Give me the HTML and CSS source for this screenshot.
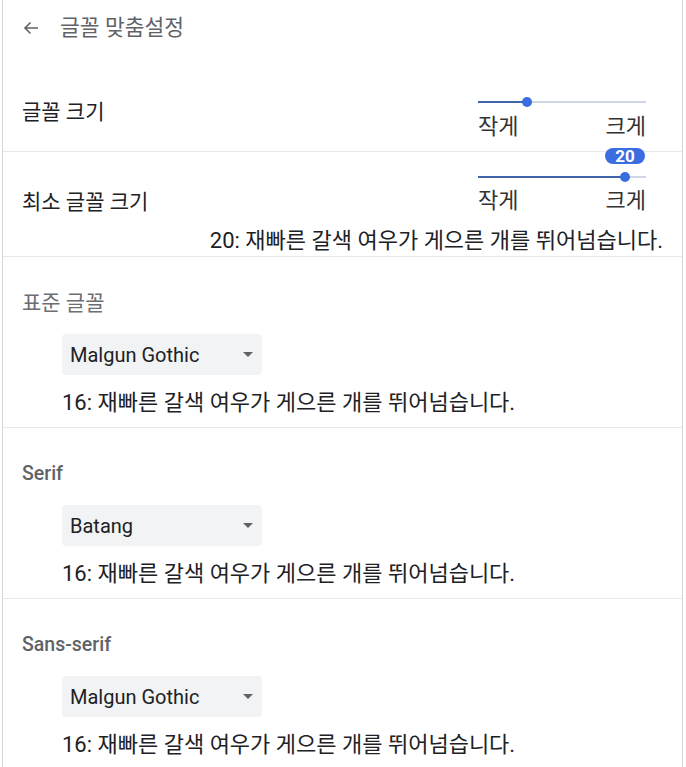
FILE: index.html
```html
<!DOCTYPE html>
<html lang="ko">
<head>
    <meta charset="UTF-8">
    <meta name="viewport" content="width=device-width, initial-scale=1.0">
    <title>글꼴 맞춤설정</title>
    <link rel="stylesheet" href="styles.css">
</head>
<body>
    <div class="page">
        <div class="header">
            <svg class="back-icon" width="16" height="14" viewBox="0 0 16 14">
                <path d="M15 7H2 M7.5 1.5 L2 7 L7.5 12.5" fill="none" stroke="#5f6368" stroke-width="1.6"/>
            </svg>
            <span class="header-title">글꼴 맞춤설정</span>
        </div>

        <div class="row row-size">
            <div class="row-label">글꼴 크기</div>
            <div class="slider">
                <div class="track-area">
                    <div class="track">
                        <div class="track-fill" style="width: 29%"></div>
                    </div>
                    <div class="thumb" style="left: 29%"></div>
                </div>
                <div class="slider-labels">
                    <span>작게</span>
                    <span>크게</span>
                </div>
            </div>
        </div>

        <div class="row row-min">
            <div class="row-top">
                <div class="row-label min-label">최소 글꼴 크기</div>
                <div class="slider">
                    <div class="track-area">
                        <div class="track">
                            <div class="track-fill" style="width: 87.5%"></div>
                        </div>
                        <div class="thumb" style="left: 87.5%"></div>
                        <div class="bubble" style="left: 87.5%">20</div>
                    </div>
                    <div class="slider-labels">
                        <span>작게</span>
                        <span>크게</span>
                    </div>
                </div>
            </div>
            <div class="sample sample-right">20: 재빠른 갈색 여우가 게으른 개를 뛰어넘습니다.</div>
        </div>

        <div class="section">
            <div class="section-title korean">표준 글꼴</div>
            <div class="font-select">
                <span>Malgun Gothic</span>
                <span class="caret"></span>
            </div>
            <div class="sample">16: 재빠른 갈색 여우가 게으른 개를 뛰어넘습니다.</div>
        </div>

        <div class="section">
            <div class="section-title">Serif</div>
            <div class="font-select">
                <span>Batang</span>
                <span class="caret"></span>
            </div>
            <div class="sample">16: 재빠른 갈색 여우가 게으른 개를 뛰어넘습니다.</div>
        </div>

        <div class="section">
            <div class="section-title">Sans-serif</div>
            <div class="font-select">
                <span>Malgun Gothic</span>
                <span class="caret"></span>
            </div>
            <div class="sample">16: 재빠른 갈색 여우가 게으른 개를 뛰어넘습니다.</div>
        </div>
    </div>
</body>
</html>
```

FILE: styles.css
```css
* {
    margin: 0;
    padding: 0;
    box-sizing: border-box;
}

body {
    font-family: Roboto, "Noto Sans CJK KR", sans-serif;
    background: #fff;
    color: #202124;
}

.page {
    margin-left: 2px;
    width: 681px;
    min-height: 767px;
    border-left: 1px solid #d6d6d6;
    border-right: 1px solid #d6d6d6;
}

.header {
    height: 72px;
    display: flex;
    align-items: flex-start;
    padding: 16px 0 0 20px;
}

.back-icon {
    margin-top: 5px;
}

.header-title {
    margin-left: 21px;
    font-size: 21.5px;
    line-height: 24px;
    color: #5f6368;
}

.row {
    border-bottom: 1px solid #e8e8e8;
    padding: 0 19px 0 19px;
}

.row-size {
    height: 80px;
    display: flex;
    justify-content: space-between;
    align-items: flex-start;
    padding-top: 22px;
}

.row-label {
    font-size: 21px;
    line-height: 24px;
    margin-top: 6px;
}

.slider {
    width: 168px;
    margin-right: 17px;
}

.track-area {
    position: relative;
    height: 16px;
}

.track {
    position: absolute;
    left: 0;
    right: 0;
    top: 7px;
    height: 2px;
    background: #cdd6e4;
}

.track-fill {
    height: 100%;
    background: #3f64a8;
}

.thumb {
    position: absolute;
    top: 3px;
    width: 10px;
    height: 10px;
    margin-left: -5px;
    border-radius: 50%;
    background: #3a6ee0;
}

.bubble {
    position: absolute;
    top: -21px;
    width: 40px;
    height: 16px;
    margin-left: -20px;
    border-radius: 8px;
    background: #3a6ee0;
    color: #fff;
    font-size: 17px;
    font-weight: 700;
    line-height: 16px;
    text-align: center;
}

.slider-labels {
    display: flex;
    justify-content: space-between;
    margin-top: 6px;
    font-size: 22px;
    line-height: 22px;
    color: #333;
}

.row-min {
    padding-top: 17px;
    padding-bottom: 3px;
}

.row-top {
    display: flex;
    justify-content: space-between;
    align-items: flex-start;
}

.min-label {
    margin-top: 21px;
}

.row-min .slider-labels {
    margin-top: 5px;
}

.sample {
    margin-top: 16px;
    font-size: 22px;
    line-height: 24px;
    color: #202124;
}

.sample-right {
    margin-top: 15px;
    text-align: right;
}

.section {
    border-bottom: 1px solid #e8e8e8;
    padding: 34px 19px 12px 19px;
}

.section .sample,
.section .font-select {
    margin-left: 40px;
}

.section-title {
    font-size: 19.5px;
    line-height: 24px;
    font-weight: 500;
    color: #5f6368;
}

.section-title.korean {
    font-size: 21px;
    font-weight: 400;
    color: #6b6e72;
}

.font-select {
    margin-top: 19px;
    width: 200px;
    height: 41px;
    display: flex;
    align-items: center;
    justify-content: space-between;
    padding: 0 9px 0 8px;
    background: #f1f3f4;
    border-radius: 4px;
    font-size: 20px;
    color: #202124;
}

.caret {
    width: 0;
    height: 0;
    border-left: 5px solid transparent;
    border-right: 5px solid transparent;
    border-top: 5px solid #5f6368;
}
```
